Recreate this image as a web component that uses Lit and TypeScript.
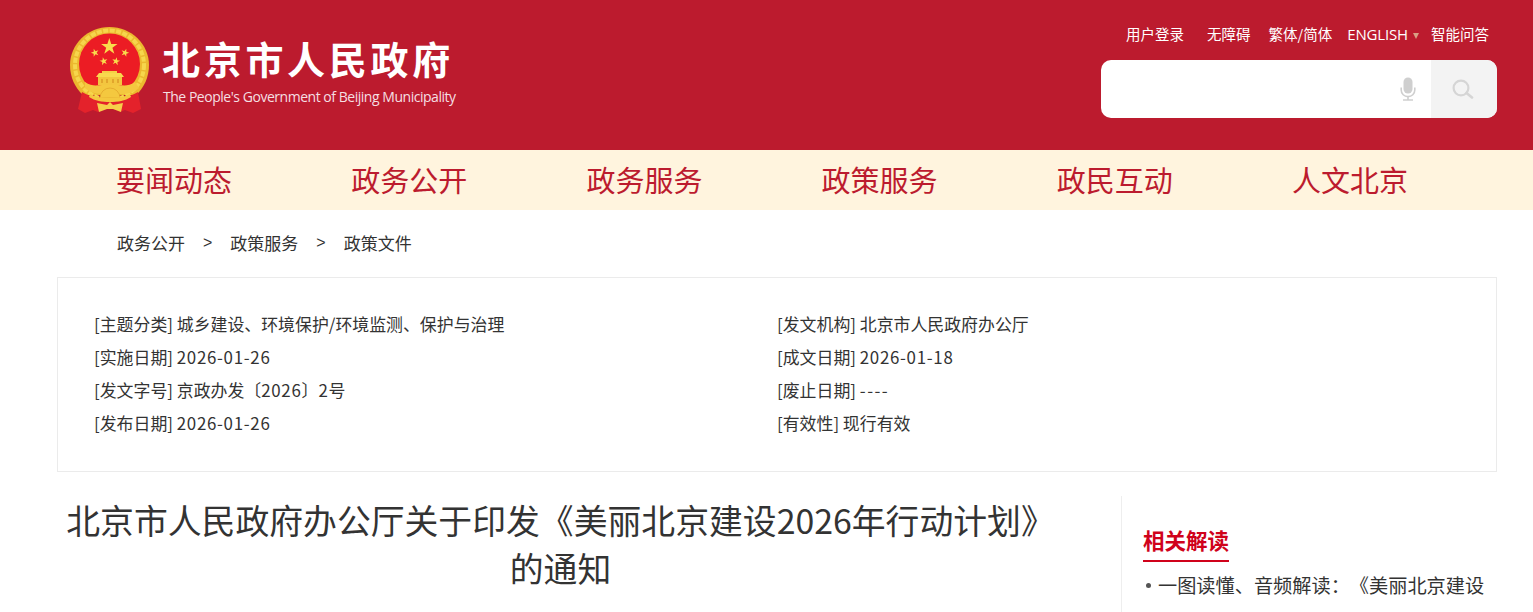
import { LitElement, html, css, svg } from "lit";
import { customElement } from "lit/decorators.js";

const star = (cx: number, cy: number, r: number, rot = 0) => {
  const pts: string[] = [];
  for (let i = 0; i < 10; i++) {
    const rad = i % 2 ? r * 0.382 : r;
    const a = ((-90 + rot + i * 36) * Math.PI) / 180;
    pts.push(`${(cx + rad * Math.cos(a)).toFixed(2)},${(cy + rad * Math.sin(a)).toFixed(2)}`);
  }
  return svg`<polygon points=${pts.join(" ")} fill="#f9dc4c"/>`;
};

const emblem = html`<svg class="emblem" viewBox="0 0 90 92" width="90" height="92" aria-hidden="true">
  <path d="M43.5 3C21.5 3 4 20.500 4 41c0 12 5 23 13 30h53c8-7 13-18 13-30C83 20.500 65.500 3 43.500 3z" fill="#ecb82f"/>
  <circle cx="43.500" cy="41" r="34.500" fill="none" stroke="#f6d64c" stroke-width="4" stroke-dasharray="5 1.500"/>
  <circle cx="43.500" cy="40" r="30.500" fill="#ec1c24"/>
  ${star(43.3, 22.7, 8.6)} ${star(29, 28.7, 4.2, -18)} ${star(59, 28.7, 4.2, 18)} ${star(37.7, 37.3, 4.2, -12)} ${star(50, 37.3, 4.2, 12)}
  <path d="M36 47h15v2H36z" fill="#f5cf45"/>
  <path d="M33 49h22l3 4H30z" fill="#f8d94e"/>
  <path d="M32 53h24v8H32z" fill="#f3c63f"/>
  <path d="M35 55h2v4h-2zM40 55h2v4h-2zM46 55h2v4h-2zM51 55h2v4h-2z" fill="#e2a62c"/>
  <path d="M16 68c5 3 10 4 14 6l8 4h12l8-4c4-2 9-3 14-6l3 17-8 4-8-3-5 2-6-3H38l-6 3-5-2-8 3-7-4z" fill="#e4222b"/>
  <path d="M19 58c7 5 13 3 17 3h16c4 0 10 2 17-3l4 6c-6 5-13 6-17 6H36c-4 0-11-1-17-6z" fill="#f4c83f"/>
  <path d="M34 74a10 10 0 0 1 20 0z" fill="#f4c83f" stroke="#e2a62c" stroke-width=".8"/>
  <path d="M24 70c6 3 12 4 20 4s14-1 20-4l1 3c-6 4-13 5-21 5s-15-1-21-5z" fill="#f4c83f"/>
  <path d="M31 79l10 2 3-3 3 3 10-2-2 9-8-3h-6l-8 3z" fill="#f6d04a"/>
</svg>`;

const mic = html`<svg class="mic" viewBox="0 0 16 24" width="16" height="24" aria-hidden="true">
  <rect x="3.500" y="0.500" width="9" height="16" rx="4.500" fill="#cfcfcf"/>
  <path d="M1.200 10.500v2.500c0 3.800 3 6.600 6.800 6.600s6.800-2.800 6.800-6.600v-2.500" fill="none" stroke="#cfcfcf" stroke-width="1.600"/>
  <path d="M8 19.500v3M3 23h10" stroke="#cfcfcf" stroke-width="1.600" fill="none"/>
</svg>`;

const search = html`<svg viewBox="0 0 22 20" width="22" height="20" aria-hidden="true">
  <circle cx="9" cy="9" r="7.400" fill="none" stroke="#d5d5d5" stroke-width="2.200"/>
  <path d="M14.500 14l5.500 4.500" stroke="#d5d5d5" stroke-width="2.600" fill="none" stroke-linecap="round"/>
</svg>`;

@customElement("app-root")
export class AppRoot extends LitElement {
  static styles = css`
    :host {
      display: block;
      height: 612px;
      overflow: hidden;
      background: #fff;
      color: #333;
      font-family: "Noto Sans CJK SC", "Noto Sans", sans-serif;
      text-spacing-trim: space-all;
    }
    .header {
      height: 150px;
      background: #bc1b2e;
      display: flex;
      justify-content: space-between;
      padding: 0 36px 0 66px;
      box-sizing: border-box;
    }
    .logo {
      display: flex;
      align-items: flex-start;
      padding-top: 24px;
      gap: 7px;
    }
    .emblem { display: block; }
    .logo-text { padding-top: 11px; color: #fff; }
    .logo-cn {
      font-size: 38px;
      line-height: 46px;
      font-weight: 700;
      letter-spacing: 3.700px;
      white-space: nowrap;
      margin-left: -1px;
    }
    .logo-en {
      font-family: "Open Sans", "Liberation Sans", sans-serif;
      font-size: 14px;
      line-height: 18px;
      margin-top: 7px;
      letter-spacing: -0.470px;
      color: #f5dfe2;
      white-space: nowrap;
    }
    .tools {
      width: 396px;
      display: flex;
      flex-direction: column;
      align-items: flex-end;
    }
    .links {
      height: 60px;
      display: flex;
      align-items: center;
      padding-top: 7px;
      box-sizing: border-box;
      color: #fff;
      font-size: 14.500px;
      padding-right: 8px;
      white-space: nowrap;
    }
    .links span { display: block; }
    .l1 { margin-right: 23px; }
    .l2 { margin-right: 18px; }
    .l3 { margin-right: 15px; }
    .l4 { margin-right: 23px; position: relative; font-family: "Open Sans", sans-serif; font-size: 15px; letter-spacing: -0.150px; }
    .l4::after {
      content: "";
      position: absolute;
      left: 66px;
      top: 9px;
      border: 3px solid transparent;
      border-top: 6px solid #d99f84;
      border-bottom: 0;
    }
    .search {
      width: 396px;
      height: 58px;
      border-radius: 10px;
      background: #fff;
      display: flex;
      justify-content: flex-end;
      overflow: hidden;
    }
    .mic-wrap {
      display: flex;
      align-items: center;
      padding-right: 15px;
    }
    .btn {
      width: 66px;
      background: #f3f3f3;
      display: flex;
      align-items: center;
      justify-content: center;
      padding-right: 2px;
      box-sizing: border-box;
    }
    .nav {
      height: 60px;
      background: #fff4de;
      display: flex;
      padding-left: 116px;
      font-size: 29px;
      color: #bc1b2e;
      line-height: 58px;
    }
    .nav span { width: 235.200px; white-space: nowrap; }
    .crumbs {
      height: 67px;
      display: flex;
      align-items: center;
      padding: 0 0 2px 117px;
      box-sizing: border-box;
      font-size: 17px;
      color: #333;
    }
    .crumbs i { font-style: normal; margin: 0 18px; font-family: "Liberation Sans", sans-serif; font-size: 16px; }
    .meta {
      margin: 0 36px 0 57px;
      height: 195px;
      box-sizing: border-box;
      border: 1px solid #ebebeb;
      padding: 30px 36px 0;
      display: grid;
      grid-template-columns: 683px 1fr;
      grid-auto-rows: 33px;
      font-size: 16.900px;
      line-height: 32px;
      color: #333;
      white-space: nowrap;
    }
    .num { letter-spacing: 0.700px; }
    .dash { letter-spacing: 1.500px; }
    .body {
      display: flex;
      margin: 24px 0 0 57px;
    }
    .title {
      width: 1007px;
      font-size: 33.850px;
      line-height: 48px;
      text-align: center;
      color: #333;
    }
    .side {
      margin-left: 57px;
      border-left: 1px solid #eee;
      height: 130px;
      padding: 26px 0 0 21px;
      width: 350px;
      box-sizing: content-box;
    }
    .side h3 {
      display: inline-block;
      margin: 0;
      font-size: 21.500px;
      line-height: 36px;
      font-weight: 700;
      color: #d0021b;
      border-bottom: 2px solid #d0021b;
      padding-bottom: 2px;
    }
    .side p {
      display: flex;
      align-items: center;
      margin: 5px 0 0;
      font-size: 19.200px;
      line-height: 36px;
      color: #333;
      white-space: nowrap;
    }
    .side p::before {
      content: "";
      width: 5px;
      height: 5px;
      border-radius: 50%;
      background: #555;
      margin: 0 7px 0 3px;
    }
  `;

  render() {
    return html`
      <div class="header">
        <div class="logo">
          ${emblem}
          <div class="logo-text">
            <div class="logo-cn">北京市人民政府</div>
            <div class="logo-en">The People's Government of Beijing Municipality</div>
          </div>
        </div>
        <div class="tools">
          <div class="links">
            <span class="l1">用户登录</span><span class="l2">无障碍</span><span class="l3">繁体/简体</span><span class="l4">ENGLISH</span><span>智能问答</span>
          </div>
          <div class="search">
            <div class="mic-wrap">${mic}</div>
            <div class="btn">${search}</div>
          </div>
        </div>
      </div>
      <div class="nav">
        <span>要闻动态</span><span>政务公开</span><span>政务服务</span><span>政策服务</span><span>政民互动</span><span>人文北京</span>
      </div>
      <div class="crumbs">政务公开<i>&gt;</i>政策服务<i>&gt;</i>政策文件</div>
      <div class="meta">
        <div>[主题分类] 城乡建设、环境保护/环境监测、保护与治理</div><div>[发文机构] 北京市人民政府办公厅</div>
        <div>[实施日期] <span class="num">2026-01-26</span></div><div>[成文日期] <span class="num">2026-01-18</span></div>
        <div>[发文字号] 京政办发〔<span class="num">2026</span>〕<span class="num">2</span>号</div><div>[废止日期] <span class="dash">----</span></div>
        <div>[发布日期] <span class="num">2026-01-26</span></div><div>[有效性] 现行有效</div>
      </div>
      <div class="body">
        <div class="title">北京市人民政府办公厅关于印发《美丽北京建设2026年行动计划》的通知</div>
        <div class="side">
          <h3>相关解读</h3>
          <p>一图读懂、音频解读：《美丽北京建设</p>
        </div>
      </div>
    `;
  }
}
